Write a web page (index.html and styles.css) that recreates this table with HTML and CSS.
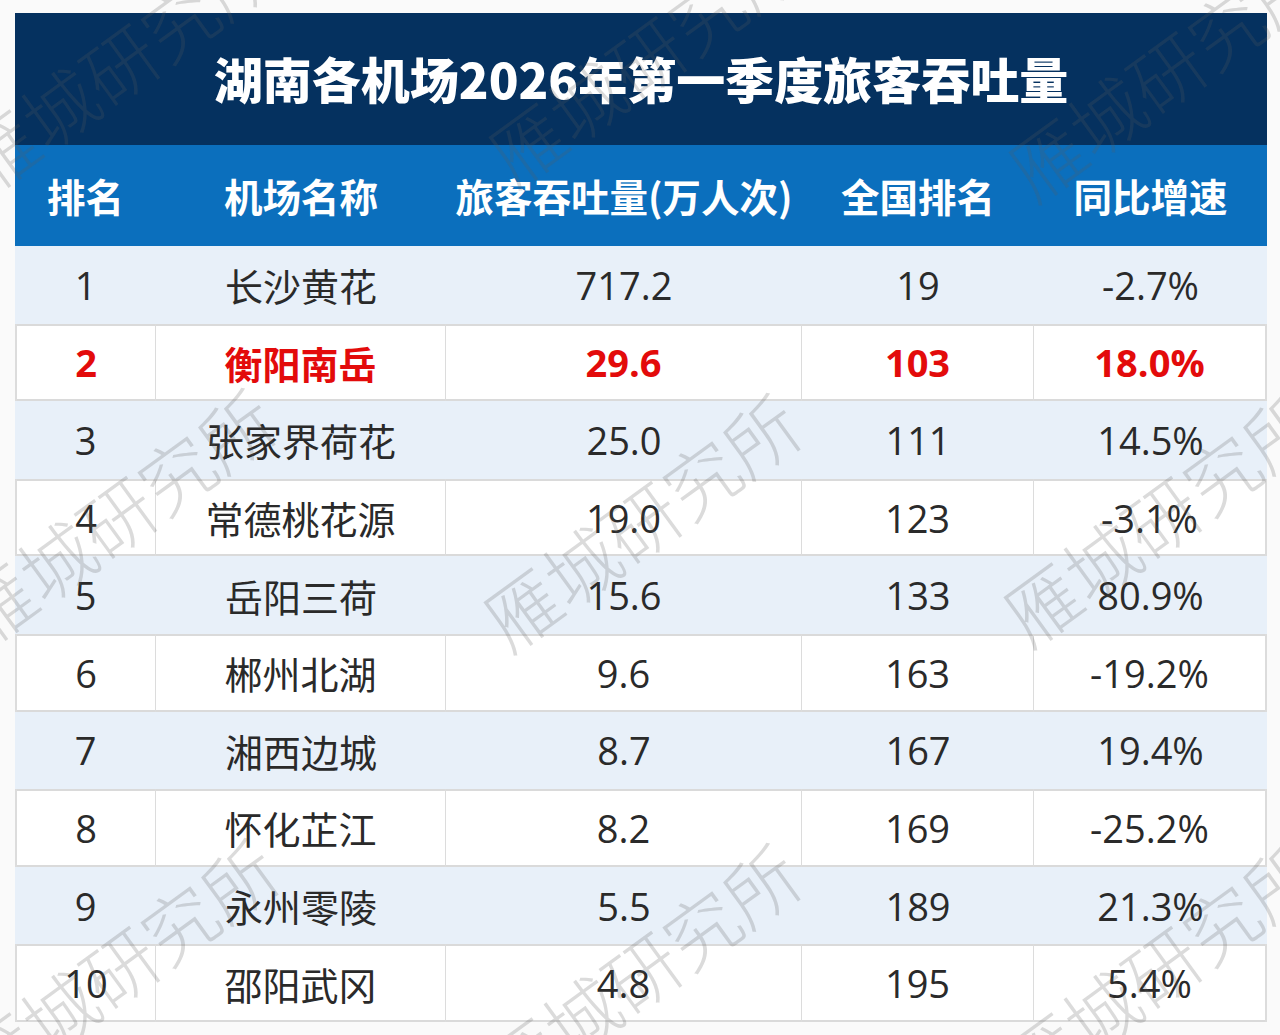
FILE: index.html
```html
<!DOCTYPE html>
<html lang="zh-CN">
<head>
<meta charset="utf-8">
<title>湖南各机场2026年第一季度旅客吞吐量</title>
<link rel="stylesheet" href="styles.css">
</head>
<body>
<div class="page">
  <div class="sheet">
    <div class="title">湖南各机场2026年第一季度旅客吞吐量</div>
    <div class="row head">
      <div class="cell">排名</div>
      <div class="cell">机场名称</div>
      <div class="cell">旅客吞吐量(万人次)</div>
      <div class="cell">全国排名</div>
      <div class="cell">同比增速</div>
    </div>
    <div class="row tint"><div class="cell">1</div><div class="cell">长沙黄花</div><div class="cell">717.2</div><div class="cell">19</div><div class="cell">-2.7%</div></div>
    <div class="row plain hot"><div class="cell">2</div><div class="cell">衡阳南岳</div><div class="cell">29.6</div><div class="cell">103</div><div class="cell">18.0%</div></div>
    <div class="row tint"><div class="cell">3</div><div class="cell">张家界荷花</div><div class="cell">25.0</div><div class="cell">111</div><div class="cell">14.5%</div></div>
    <div class="row plain"><div class="cell">4</div><div class="cell">常德桃花源</div><div class="cell">19.0</div><div class="cell">123</div><div class="cell">-3.1%</div></div>
    <div class="row tint"><div class="cell">5</div><div class="cell">岳阳三荷</div><div class="cell">15.6</div><div class="cell">133</div><div class="cell">80.9%</div></div>
    <div class="row plain"><div class="cell">6</div><div class="cell">郴州北湖</div><div class="cell">9.6</div><div class="cell">163</div><div class="cell">-19.2%</div></div>
    <div class="row tint"><div class="cell">7</div><div class="cell">湘西边城</div><div class="cell">8.7</div><div class="cell">167</div><div class="cell">19.4%</div></div>
    <div class="row plain"><div class="cell">8</div><div class="cell">怀化芷江</div><div class="cell">8.2</div><div class="cell">169</div><div class="cell">-25.2%</div></div>
    <div class="row tint"><div class="cell">9</div><div class="cell">永州零陵</div><div class="cell">5.5</div><div class="cell">189</div><div class="cell">21.3%</div></div>
    <div class="row plain last"><div class="cell">10</div><div class="cell">邵阳武冈</div><div class="cell">4.8</div><div class="cell">195</div><div class="cell">5.4%</div></div>
  </div>
  <div class="marks" aria-hidden="true">
    <span class="mark m1">雁城研究所</span>
    <span class="mark m2">雁城研究所</span>
    <span class="mark m3">雁城研究所</span>
    <span class="mark m4">雁城研究所</span>
    <span class="mark m5">雁城研究所</span>
    <span class="mark m6">雁城研究所</span>
    <span class="mark m7">雁城研究所</span>
    <span class="mark m8">雁城研究所</span>
    <span class="mark m9">雁城研究所</span>
  </div>
</div>
</body>
</html>
```

FILE: styles.css
```css
html, body {
  margin: 0;
  padding: 0;
  background: #fafafa;
}

.page {
  position: relative;
  width: 1280px;
  height: 1035px;
  overflow: hidden;
  padding: 13px 13px 0 15px;
  box-sizing: border-box;
  font-family: "Open Sans", "Noto Sans CJK SC", sans-serif;
}

.sheet {
  width: 1252px;
}

.title {
  height: 132px;
  background: #05315f;
  color: #ffffff;
  font-family: "Noto Sans CJK SC", sans-serif;
  font-weight: 900;
  font-size: 49px;
  display: flex;
  align-items: center;
  justify-content: center;
  padding-bottom: 4px;
  box-sizing: border-box;
}

.row {
  display: grid;
  grid-template-columns: 141px 290px 356px 232px 233px;
  height: 77.6px;
}

.cell {
  display: flex;
  align-items: center;
  justify-content: center;
  box-sizing: border-box;
  font-size: 38px;
  color: #2a2a2a;
  white-space: nowrap;
}

.head {
  height: 101px;
  background: #0b6fbd;
}

.head .cell {
  color: #ffffff;
  font-family: "Noto Sans CJK SC", sans-serif;
  font-weight: 700;
  font-size: 38.5px;
  padding-bottom: 2px;
}

.tint {
  background: #e8f0f9;
}

.plain {
  background: #ffffff;
  box-shadow: inset 0 2px 0 #dadada, inset 0 -2px 0 #dadada;
}

.plain .cell {
  border-right: 1px solid #dcdcdc;
}

.plain .cell:first-child {
  border-left: 2px solid #dcdcdc;
}

.plain .cell:last-child {
  border-right: 2px solid #dcdcdc;
}

.hot .cell {
  color: #e30b0b;
  font-weight: 700;
}

.marks {
  position: absolute;
  inset: 0;
  pointer-events: none;
}

.mark {
  position: absolute;
  width: 400px;
  margin-left: -200px;
  margin-top: -50px;
  height: 100px;
  line-height: 100px;
  text-align: center;
  font-family: "Noto Sans CJK SC", sans-serif;
  font-weight: 300;
  font-size: 74px;
  color: rgba(90, 90, 90, 0.22);
  transform: rotate(-36deg);
  white-space: nowrap;
}

.m1 { left: 118px; top: 62px; }
.m2 { left: 645px; top: 55px; }
.m3 { left: 1165px; top: 70px; }
.m4 { left: 115px; top: 515px; }
.m5 { left: 640px; top: 520px; }
.m6 { left: 1160px; top: 515px; }
.m7 { left: 118px; top: 965px; }
.m8 { left: 640px; top: 970px; }
.m9 { left: 1160px; top: 965px; }
```
